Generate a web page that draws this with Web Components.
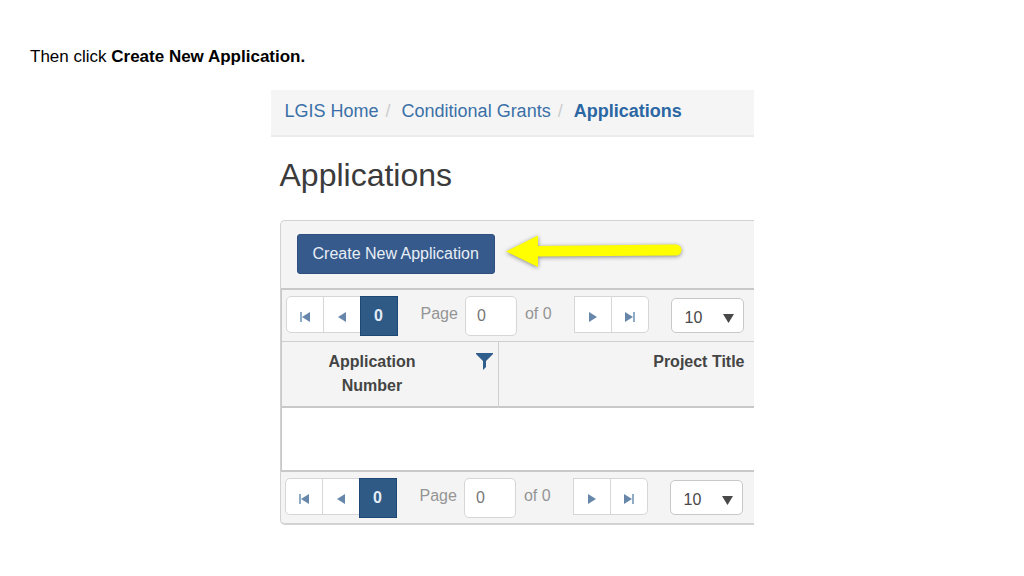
<!DOCTYPE html>
<html lang="en">
<head>
<meta charset="utf-8">
<meta name="viewport" content="width=device-width, initial-scale=1">
<title>Create New Application</title>
<style>
  body { margin: 0; background: #fff; font-family: "Liberation Sans", Arial, sans-serif; }
</style>
</head>
<body>
<guide-page>
  <span slot="step">Then click <b>Create New Application.</b></span>
  <crumb-trail>
    <crumb-link>LGIS Home</crumb-link>
    <crumb-link>Conditional Grants</crumb-link>
    <crumb-link current>Applications</crumb-link>
  </crumb-trail>
  <page-heading>Applications</page-heading>
  <grid-panel>
    <tool-bar slot="tools">
      <action-button>Create New Application</action-button>
      <pointer-arrow></pointer-arrow>
    </tool-bar>
    <grid-pager slot="top"></grid-pager>
    <data-grid></data-grid>
    <grid-pager slot="bottom"></grid-pager>
  </grid-panel>
</guide-page>

<script>
  const define = (name, html) => {
    const template = document.createElement('template');
    template.innerHTML = html;
    customElements.define(name, class extends HTMLElement {
      constructor() {
        super();
        this.attachShadow({ mode: 'open' }).append(template.content.cloneNode(true));
      }
    });
  };

  define('guide-page', `
    <style>
      :host { display: block; }
      p { margin: 0; padding: 45px 30px 0; font-size: 17px; line-height: 24px; color: #000; }
      main { max-width: 483px; margin: 21px auto 0; overflow: hidden; }
    </style>
    <p><slot name="step"></slot></p>
    <main><slot></slot></main>`);

  define('crumb-trail', `
    <style>
      :host { display: block; background: #f5f5f5; border-bottom: 2px solid #ebebeb; }
      nav { display: flex; padding: 9px 14px 12px; }
    </style>
    <nav aria-label="Breadcrumb"><slot></slot></nav>`);

  define('crumb-link', `
    <style>
      :host { display: flex; font-size: 18px; line-height: 24px; white-space: nowrap; }
      a { color: #3a70a8; text-decoration: none; }
      :host([current]) a { color: #2b67a3; font-weight: bold; }
      span { color: #ccc; padding: 0 11px 0 7px; }
      :host([current]) span { display: none; }
    </style>
    <a href="#"><slot></slot></a><span aria-hidden="true">/</span>`);

  define('page-heading', `
    <style>
      :host { display: block; }
      h1 { margin: 18px 9px 25px; font-size: 32px; line-height: 40px; font-weight: normal; color: #3b3b3b; }
    </style>
    <h1><slot></slot></h1>`);

  define('grid-panel', `
    <style>
      :host { display: block; margin-left: 9px; }
      section { border: 2px solid #d2d2d2; border-width: 1px 0 2px 1px; border-radius: 5px 0 0 5px; background: #f4f4f4; }
      .grid { border: 2px solid #c8c8c8; border-width: 2px 0 2px 1px; }
    </style>
    <section>
      <slot name="tools"></slot>
      <div class="grid"><slot name="top"></slot><slot></slot></div>
      <slot name="bottom"></slot>
    </section>`);

  define('tool-bar', `
    <style>
      :host { display: flex; align-items: center; gap: 8px; padding: 13px 16px 14px; }
    </style>
    <slot></slot>`);

  define('action-button', `
    <style>
      :host { display: block; flex: none; }
      button { display: block; height: 40px; margin: 0; padding: 0 15px; border: 1px solid #2e4f7f; border-radius: 3px;
        background: #365a8c; color: #e9eef6; font: 16px/24px "Liberation Sans", Arial, sans-serif; }
    </style>
    <button type="button"><slot></slot></button>`);

  define('pointer-arrow', `
    <style>
      :host { display: block; flex: none; }
      svg { display: block; filter: drop-shadow(0 1px 2px #888); overflow: visible; }
    </style>
    <svg width="184" height="40" viewBox="0 0 184 40" aria-hidden="true">
      <path d="M3 17.5L35 1.5V12L173 10.5A5.5 5.5 0 0 1 173 21.5L35 22.5V33Z" fill="#ff0"/>
    </svg>`);

  define('grid-pager', `
    <style>
      :host { display: flex; align-items: flex-start; padding: 6px 10px 5px 4px; font-size: 16px; line-height: 24px; color: #949494; }
      button { box-sizing: border-box; height: 37px; width: 38px; margin: 0; padding: 4px 0 0; border: 1px solid #d6d6d6;
        background: #fff; display: grid; place-items: center; font: bold 16px/24px "Liberation Sans", Arial, sans-serif; }
      button + button { margin-left: -1px; }
      .first { border-radius: 5px 0 0 5px; }
      .last { border-radius: 0 5px 5px 0; }
      .now { height: 40px; padding: 0; background: #2f5a86; border-color: #1d4775; color: #e4edf6; }
      .group { display: flex; }
      label { display: flex; margin-left: 23px; gap: 7px; }
      label span, .of { padding-top: 6px; }
      input { box-sizing: border-box; width: 52px; height: 40px; margin: 0; padding: 0 11px; border: 1px solid #d6d6d6; border-radius: 5px;
        background: #fff; color: #777; font: 16px/24px "Liberation Sans", Arial, sans-serif; }
      .of { padding-left: 8px; padding-right: 22px; white-space: nowrap; }
      .size { display: grid; margin: 2px 0 0 22px; }
      .size > * { grid-area: 1 / 1; }
      select { appearance: none; box-sizing: border-box; width: 73px; height: 35px; margin: 0; padding: 4px 13px 0; border: 1px solid #c8c8c8; border-radius: 5px;
        background: #fff; color: #484848; font: 16px/24px "Liberation Sans", Arial, sans-serif; }
      .size svg { place-self: center end; margin: 6px 10px 0 0; pointer-events: none; }
      svg { display: block; }
    </style>
    <div class="group">
      <button type="button" class="first" aria-label="First page"><svg width="12" height="12" viewBox="0 0 12 12"><path d="M1 1h2v10H1z" fill="#8fabc6"/><path d="M11 1v10L3 6z" fill="#6787aa"/></svg></button>
      <button type="button" aria-label="Previous page"><svg width="12" height="12" viewBox="0 0 12 12"><path d="M10 1v10L2 6z" fill="#6787aa"/></svg></button>
      <button type="button" class="now">0</button>
    </div>
    <label><span>Page</span><input type="text" value="0"></label>
    <div class="of">of 0</div>
    <div class="group">
      <button type="button" aria-label="Next page"><svg width="12" height="12" viewBox="0 0 12 12"><path d="M2 1v10l8-5z" fill="#6787aa"/></svg></button>
      <button type="button" class="last" aria-label="Last page"><svg width="12" height="12" viewBox="0 0 12 12"><path d="M9 1h2v10H9z" fill="#8fabc6"/><path d="M1 1v10l8-5z" fill="#6787aa"/></svg></button>
    </div>
    <div class="size">
      <select aria-label="Rows per page"><option>10</option><option>20</option></select>
      <svg width="11" height="9" viewBox="0 0 11 9" aria-hidden="true"><path d="M0 0h11L5.5 9z" fill="#484848"/></svg>
    </div>`);

  define('data-grid', `
    <style>
      :host { display: block; border-top: 1px solid #cfcfcf; }
      table { width: 100%; border-collapse: separate; border-spacing: 0; table-layout: fixed; font-size: 16px; line-height: 24px; color: #444; }
      th { height: 48px; padding: 8px 9px; vertical-align: top; text-align: right; font-weight: bold; border-bottom: 2px solid #c8c8c8; }
      th:first-child { width: 198px; border-right: 1px solid #cfcfcf; }
      .head { display: flex; }
      .head span { flex: 1; text-align: center; padding: 0 31px 0 9px; }
      button { margin: 3px -4px 0 0; padding: 0; border: 0; background: none; height: 17px; }
      svg { display: block; }
      td { height: 62px; padding: 0; background: #fff; }
    </style>
    <table>
      <thead><tr>
        <th scope="col"><div class="head"><span>Application Number</span><button type="button" aria-label="Filter"><svg width="17" height="17" viewBox="0 0 17 17"><path d="M0 0h17v1L10 8v6l-3 3V8L0 1z" fill="#2f5d8c"/></svg></button></div></th>
        <th scope="col">Project Title</th>
      </tr></thead>
      <tbody><tr><td colspan="2"></td></tr></tbody>
    </table>`);
</script>
</body>
</html>
